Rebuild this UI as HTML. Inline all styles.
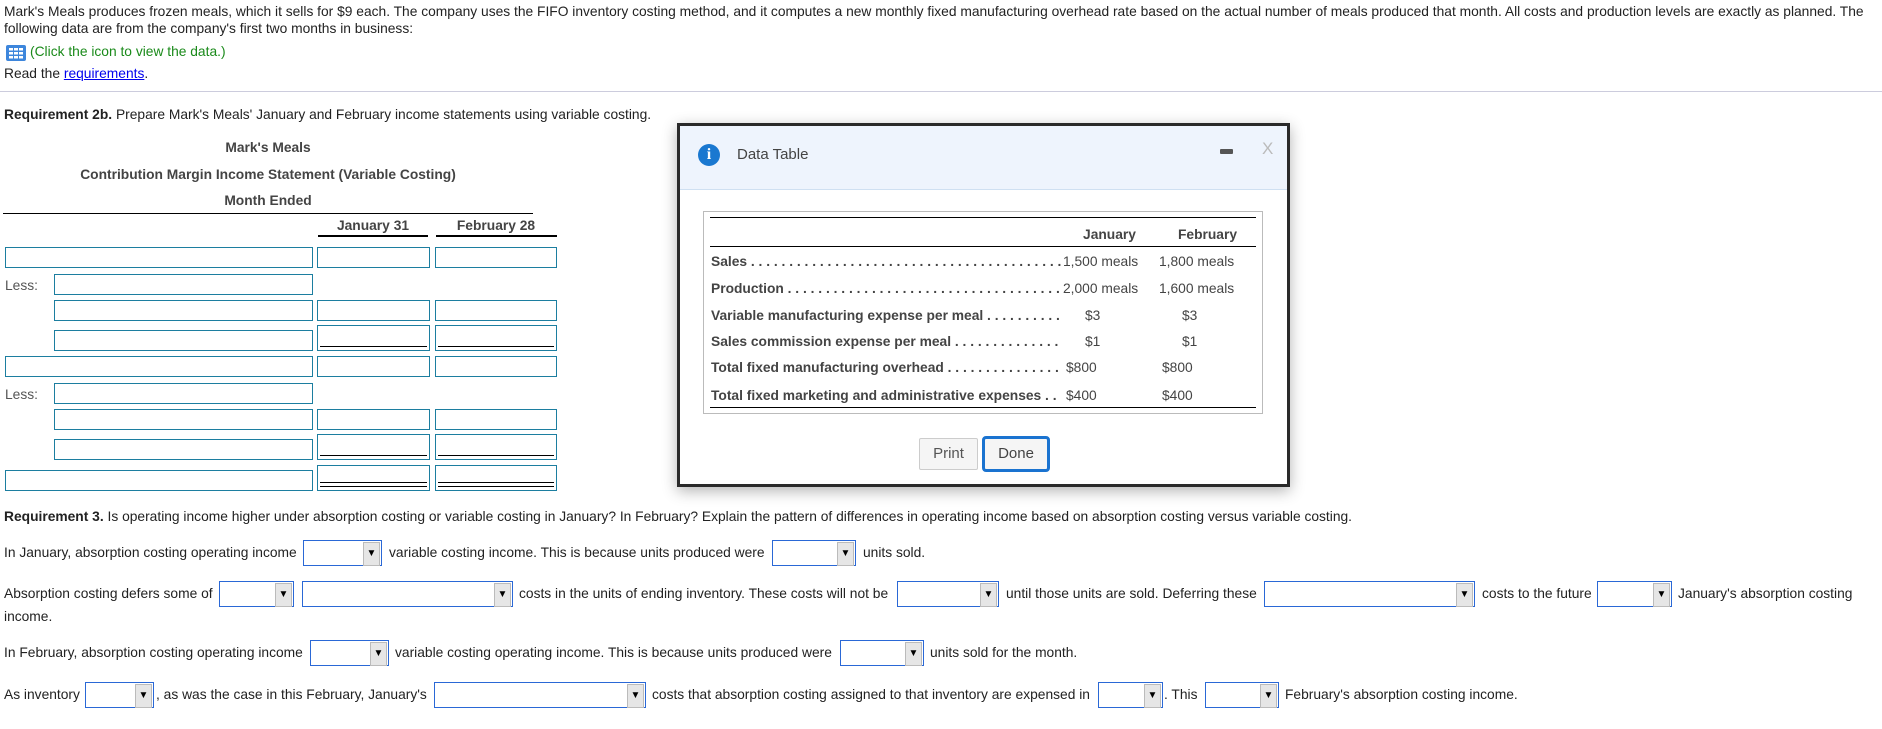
<!DOCTYPE html>
<html><head><meta charset="utf-8"><style>
*{margin:0;padding:0;box-sizing:border-box}
body{width:1882px;height:729px;overflow:hidden;background:#fff;font-family:"Liberation Sans",Arial,sans-serif;font-size:13.8px;color:#222;position:relative}
.a{position:absolute;white-space:nowrap;line-height:16px}
.h{font-weight:bold;color:#444;text-align:center}
.in{position:absolute;border:1.5px solid #1c7ea0;height:21px;background:#fff}
.tl{height:26px}
.u1:after{content:"";position:absolute;left:2px;right:2px;bottom:3px;border-bottom:1px solid #000}
.u2:after{content:"";position:absolute;left:2px;right:2px;bottom:3px;height:3px;border-top:1px solid #000;border-bottom:1px solid #000}
.sel{position:absolute;border:1px solid #2a68d6;height:26px;background:#fff}
.sel:after{content:"▼";position:absolute;right:1px;top:1px;width:15px;height:22px;background:#e6e6e6;border:1px solid #bbb;font-size:10px;line-height:22px;text-align:center;color:#000}
.lbl{position:absolute;left:711px;width:350px;overflow:hidden;white-space:nowrap;font-weight:bold;color:#444;line-height:16px}
.v{position:absolute;color:#444;line-height:16px;white-space:nowrap}
</style></head><body>
<div class="a" style="left:4px;top:4px">Mark's Meals produces frozen meals, which it sells for $9 each. The company uses the FIFO inventory costing method, and it computes a new monthly fixed manufacturing overhead rate based on the actual number of meals produced that month. All costs and production levels are exactly as planned. The</div>
<div class="a" style="left:4px;top:21px">following data are from the company's first two months in business:</div>
<svg style="position:absolute;left:6px;top:45px" width="20" height="16" viewBox="0 0 20 16"><rect width="20" height="16" rx="2" fill="#3d86dc"/><g fill="#fff"><rect x="3" y="3" width="4" height="2.5"/><rect x="8" y="3" width="4" height="2.5"/><rect x="13" y="3" width="4" height="2.5"/><rect x="3" y="7" width="4" height="2.5"/><rect x="8" y="7" width="4" height="2.5"/><rect x="13" y="7" width="4" height="2.5"/><rect x="3" y="11" width="4" height="2.5"/><rect x="8" y="11" width="4" height="2.5"/><rect x="13" y="11" width="4" height="2.5"/></g></svg>
<div class="a" style="left:30px;top:44px;color:#1a8a1a">(Click the icon to view the data.)</div>
<div class="a" style="left:4px;top:66px">Read the <span style="color:#00e;text-decoration:underline">requirements</span>.</div>
<div style="position:absolute;left:0;top:91px;width:1882px;border-top:1px solid #ccd"></div>
<div class="a" style="left:4px;top:107px"><b>Requirement 2b.</b> Prepare Mark's Meals' January and February income statements using variable costing.</div>
<div class="a h" style="left:4px;width:528px;top:140px">Mark's Meals</div>
<div class="a h" style="left:4px;width:528px;top:167px">Contribution Margin Income Statement (Variable Costing)</div>
<div class="a h" style="left:4px;width:528px;top:193px">Month Ended</div>
<div style="position:absolute;left:3px;top:213px;width:530px;border-top:1px solid #000"></div>
<div class="a h" style="left:318px;width:110px;top:218px">January 31</div>
<div class="a h" style="left:436px;width:120px;top:218px">February 28</div>
<div style="position:absolute;left:318px;top:235px;width:110px;border-top:2px solid #000"></div>
<div style="position:absolute;left:436px;top:235px;width:121px;border-top:2px solid #000"></div>

<div class="in" style="left:5px;top:247px;width:308px"></div><div class="in" style="left:317px;top:247px;width:113px"></div><div class="in" style="left:435px;top:247px;width:122px"></div>
<div class="a" style="left:5px;top:278px;color:#555">Less:</div>
<div class="in" style="left:54px;top:274px;width:259px"></div>
<div class="in" style="left:54px;top:300px;width:259px"></div><div class="in" style="left:317px;top:300px;width:113px"></div><div class="in" style="left:435px;top:300px;width:122px"></div>
<div class="in" style="left:54px;top:330px;width:259px"></div><div class="in tl u1" style="left:317px;top:325px;width:113px"></div><div class="in tl u1" style="left:435px;top:325px;width:122px"></div>
<div class="in" style="left:5px;top:356px;width:308px"></div><div class="in" style="left:317px;top:356px;width:113px"></div><div class="in" style="left:435px;top:356px;width:122px"></div>
<div class="a" style="left:5px;top:387px;color:#555">Less:</div>
<div class="in" style="left:54px;top:383px;width:259px"></div>
<div class="in" style="left:54px;top:409px;width:259px"></div><div class="in" style="left:317px;top:409px;width:113px"></div><div class="in" style="left:435px;top:409px;width:122px"></div>
<div class="in" style="left:54px;top:439px;width:259px"></div><div class="in tl u1" style="left:317px;top:434px;width:113px"></div><div class="in tl u1" style="left:435px;top:434px;width:122px"></div>
<div class="in" style="left:5px;top:470px;width:308px"></div><div class="in tl u2" style="left:317px;top:465px;width:113px"></div><div class="in tl u2" style="left:435px;top:465px;width:122px"></div>

<!-- modal -->
<div style="position:absolute;left:677px;top:123px;width:613px;height:364px;border:3px solid #2a2a2a;background:#fff;box-shadow:0 4px 14px rgba(0,0,0,.3)">
<div style="height:64px;background:#eef4fd;border-bottom:1px solid #cfe0f2"></div>
</div>
<div style="position:absolute;left:698px;top:144px;width:22px;height:22px;border-radius:50%;background:#1a78d0;color:#fff;font:bold 16px 'Liberation Serif',serif;text-align:center;line-height:22px">i</div>
<div class="a" style="left:737px;top:147px;font-size:15px;color:#444">Data Table</div>
<div style="position:absolute;left:1220px;top:149px;width:13px;height:5px;background:#555;border-radius:1px"></div>
<div class="a" style="left:1262px;top:141px;font-size:17px;color:#bbb">X</div>
<div style="position:absolute;left:703px;top:211px;width:560px;height:203px;border:1px solid #bbb"></div>
<div style="position:absolute;left:710px;top:217px;width:546px;border-top:1px solid #000"></div>
<div class="v" style="left:1082px;top:227px;font-weight:bold;width:55px;text-align:center">January</div>
<div class="v" style="left:1175px;top:227px;font-weight:bold;width:65px;text-align:center">February</div>
<div style="position:absolute;left:710px;top:246px;width:546px;border-top:1px solid #000"></div>
<div class="lbl" style="top:254px">Sales . . . . . . . . . . . . . . . . . . . . . . . . . . . . . . . . . . . . . . . . . . . . . . . . . . . . . . .</div>
<div class="lbl" style="top:281px">Production . . . . . . . . . . . . . . . . . . . . . . . . . . . . . . . . . . . . . . . . . . . . . . . . . . .</div>
<div class="lbl" style="top:308px">Variable manufacturing expense per meal . . . . . . . . . . . . . . . . . . . .</div>
<div class="lbl" style="top:334px">Sales commission expense per meal . . . . . . . . . . . . . . . . . . . . . . . .</div>
<div class="lbl" style="top:360px">Total fixed manufacturing overhead . . . . . . . . . . . . . . . . . . . . . . . .</div>
<div class="lbl" style="top:388px">Total fixed marketing and administrative expenses . . . . . . . .</div>
<div class="v" style="left:1063px;top:254px">1,500 meals</div><div class="v" style="left:1159px;top:254px">1,800 meals</div>
<div class="v" style="left:1063px;top:281px">2,000 meals</div><div class="v" style="left:1159px;top:281px">1,600 meals</div>
<div class="v" style="left:1085px;top:308px">$3</div><div class="v" style="left:1182px;top:308px">$3</div>
<div class="v" style="left:1085px;top:334px">$1</div><div class="v" style="left:1182px;top:334px">$1</div>
<div class="v" style="left:1066px;top:360px">$800</div><div class="v" style="left:1162px;top:360px">$800</div>
<div class="v" style="left:1066px;top:388px">$400</div><div class="v" style="left:1162px;top:388px">$400</div>
<div style="position:absolute;left:710px;top:407px;width:546px;border-top:1px solid #000"></div>
<div style="position:absolute;left:919px;top:438px;width:59px;height:32px;border:1px solid #ccc;background:#f5f5f5;border-radius:2px;color:#555;font-size:15px;text-align:center;line-height:30px">Print</div>
<div style="position:absolute;left:982px;top:436px;width:68px;height:36px;border:3px solid #1a73d0;background:#f5f5f5;border-radius:4px;color:#444;font-size:15px;text-align:center;line-height:30px">Done</div>

<!-- requirement 3 -->
<div class="a" style="left:4px;top:509px"><b>Requirement 3.</b> Is operating income higher under absorption costing or variable costing in January? In February? Explain the pattern of differences in operating income based on absorption costing versus variable costing.</div>
<div class="a" style="left:4px;top:545px">In January, absorption costing operating income</div>
<div class="sel" style="left:303px;top:540px;width:79px"></div>
<div class="a" style="left:389px;top:545px">variable costing income. This is because units produced were</div>
<div class="sel" style="left:772px;top:540px;width:84px"></div>
<div class="a" style="left:863px;top:545px">units sold.</div>

<div class="a" style="left:4px;top:586px">Absorption costing defers some of</div>
<div class="sel" style="left:219px;top:581px;width:75px"></div>
<div class="sel" style="left:302px;top:581px;width:211px"></div>
<div class="a" style="left:519px;top:586px">costs in the units of ending inventory. These costs will not be</div>
<div class="sel" style="left:897px;top:581px;width:102px"></div>
<div class="a" style="left:1006px;top:586px">until those units are sold. Deferring these</div>
<div class="sel" style="left:1264px;top:581px;width:211px"></div>
<div class="a" style="left:1482px;top:586px">costs to the future</div>
<div class="sel" style="left:1597px;top:581px;width:75px"></div>
<div class="a" style="left:1678px;top:586px">January's absorption costing</div>
<div class="a" style="left:4px;top:609px">income.</div>

<div class="a" style="left:4px;top:645px">In February, absorption costing operating income</div>
<div class="sel" style="left:310px;top:640px;width:79px"></div>
<div class="a" style="left:395px;top:645px">variable costing operating income. This is because units produced were</div>
<div class="sel" style="left:840px;top:640px;width:84px"></div>
<div class="a" style="left:930px;top:645px">units sold for the month.</div>

<div class="a" style="left:4px;top:687px">As inventory</div>
<div class="sel" style="left:85px;top:682px;width:69px"></div>
<div class="a" style="left:156px;top:687px">, as was the case in this February, January's</div>
<div class="sel" style="left:434px;top:682px;width:212px"></div>
<div class="a" style="left:652px;top:687px">costs that absorption costing assigned to that inventory are expensed in</div>
<div class="sel" style="left:1098px;top:682px;width:65px"></div>
<div class="a" style="left:1164px;top:687px">. This</div>
<div class="sel" style="left:1205px;top:682px;width:74px"></div>
<div class="a" style="left:1285px;top:687px">February's absorption costing income.</div>
</body></html>
